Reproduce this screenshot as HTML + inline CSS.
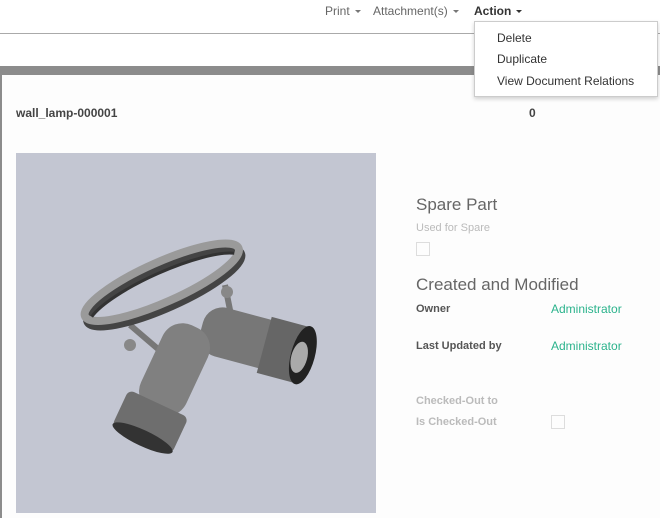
<!DOCTYPE html>
<html><head><style>
*{margin:0;padding:0;box-sizing:border-box}
body{width:660px;height:518px;overflow:hidden;background:#fff;font-family:"Liberation Sans",sans-serif;position:relative;color:#555}
.abs{position:absolute;white-space:nowrap}
.menu{top:4px;font-size:12px;color:#666}
.car{display:inline-block;border-left:3px solid transparent;border-right:3px solid transparent;border-top:3px solid #777;vertical-align:middle;margin-left:5px}
</style></head><body>
<div class="abs menu" style="left:325px">Print<span class="car"></span></div>
<div class="abs menu" style="left:373px">Attachment(s)<span class="car"></span></div>
<div class="abs menu" style="left:474px;color:#333;font-weight:bold">Action<span class="car" style="border-top-color:#333"></span></div>
<div class="abs" style="left:0;top:33px;width:660px;height:1px;background:#aaa"></div>
<div class="abs" style="left:0;top:66px;width:660px;height:9px;background:#8c8c8c"></div>
<div class="abs" style="left:0;top:75px;width:2px;height:443px;background:#8c8c8c"></div>
<div class="abs" style="left:2px;top:75px;width:658px;height:443px;background:#fdfdfd"></div>
<div class="abs" style="left:474px;top:21px;width:184px;height:76px;background:#fff;border:1px solid #ccc;box-shadow:0 2px 4px rgba(0,0,0,.18)"></div>
<div class="abs" style="left:497px;top:31px;font-size:12px;color:#333">Delete</div>
<div class="abs" style="left:497px;top:52px;font-size:12px;color:#333">Duplicate</div>
<div class="abs" style="left:497px;top:74px;font-size:12px;color:#333">View Document Relations</div>
<div class="abs" style="left:16px;top:106px;font-size:12px;font-weight:bold;color:#444">wall_lamp-000001</div>
<div class="abs" style="left:529px;top:106px;font-size:12px;font-weight:bold;color:#444">0</div>
<svg class="abs" style="left:16px;top:153px" width="360" height="360" viewBox="0 0 360 360">
<rect width="360" height="360" fill="#c3c6d2"/>
<g transform="translate(-16,-153)">
<line x1="130" y1="325" x2="165" y2="355" stroke="#777" stroke-width="6"/>
<line x1="225" y1="285" x2="232" y2="320" stroke="#777" stroke-width="6"/>
<circle cx="130" cy="345" r="6" fill="#888"/>
<circle cx="227" cy="292" r="6" fill="#888"/>
<g transform="rotate(-24 163 285)">
<ellipse cx="163" cy="288" rx="84" ry="20" fill="none" stroke="#444" stroke-width="8"/>
<ellipse cx="163" cy="282" rx="84" ry="20" fill="none" stroke="#9a9a9a" stroke-width="8"/>
<path d="M85 285 A84 20 0 0 1 241 285" fill="none" stroke="#333" stroke-width="3"/>
</g>
<g transform="rotate(15 250 340)">
<rect x="200" y="315" width="90" height="50" rx="20" fill="#777"/>
<rect x="265" y="312" width="40" height="58" fill="#666"/>
<ellipse cx="305" cy="341" rx="12" ry="30" fill="#222"/>
<ellipse cx="302" cy="344" rx="8" ry="16" fill="#aaa"/>
</g>
<g transform="rotate(25 165 390)">
<rect x="140" y="320" width="50" height="95" rx="22" fill="#808080"/>
<rect x="132" y="405" width="66" height="40" rx="6" fill="#6e6e6e"/>
<ellipse cx="165" cy="443" rx="33" ry="8" fill="#333"/>
</g>
</g>
</svg>
<div class="abs" style="left:416px;top:195px;font-size:17px;color:#666">Spare Part</div>
<div class="abs" style="left:416px;top:222px;font-size:11px;color:#bbb">Used for Spare</div>
<div class="abs" style="left:416px;top:242px;width:14px;height:14px;border:1px solid #ddd"></div>
<div class="abs" style="left:416px;top:275px;font-size:17px;color:#666">Created and Modified</div>
<div class="abs" style="left:416px;top:303px;font-size:11px;font-weight:bold;color:#555">Owner</div>
<div class="abs" style="left:551px;top:302px;font-size:12px;color:#2bb38c">Administrator</div>
<div class="abs" style="left:416px;top:340px;font-size:11px;font-weight:bold;color:#555">Last Updated by</div>
<div class="abs" style="left:551px;top:339px;font-size:12px;color:#2bb38c">Administrator</div>
<div class="abs" style="left:416px;top:395px;font-size:11px;font-weight:bold;color:#bbb">Checked-Out to</div>
<div class="abs" style="left:416px;top:416px;font-size:11px;font-weight:bold;color:#bbb">Is Checked-Out</div>
<div class="abs" style="left:551px;top:415px;width:14px;height:14px;border:1px solid #ddd"></div>
</body></html>
